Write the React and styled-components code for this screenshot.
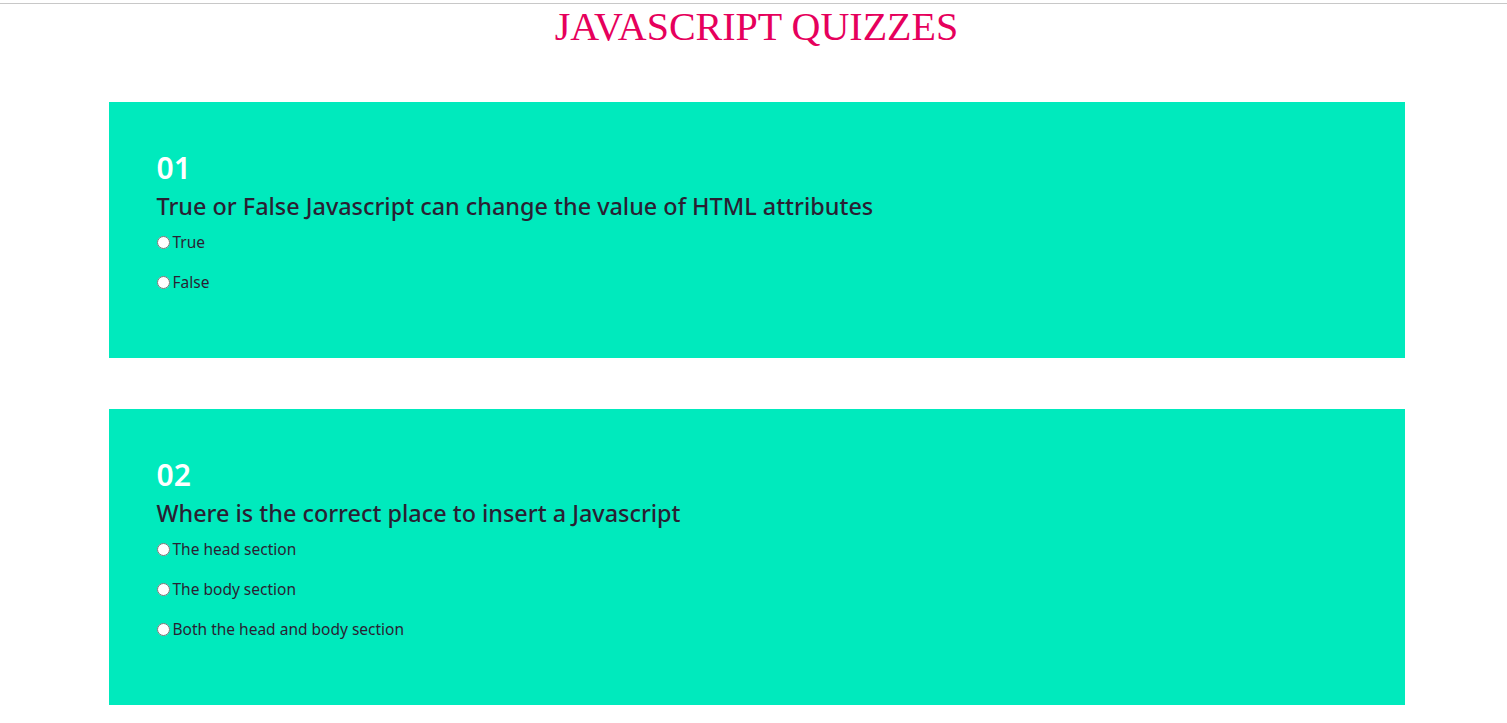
import React from 'react'
import styled, { createGlobalStyle } from 'styled-components'

const quizzes = [
  {
    id: '01',
    question: 'True or False Javascript can change the value of HTML attributes',
    options: ['True', 'False'],
  },
  {
    id: '02',
    question: 'Where is the correct place to insert a Javascript',
    options: ['The head section', 'The body section', 'Both the head and body section'],
  },
]

const GlobalStyle = createGlobalStyle`
  html, body {
    margin: 0;
    padding: 0;
    background: #fff;
  }
  body {
    border-top: 1px solid #c8c8c8;
    margin-top: 3px;
  }
`

export default function App() {
  return (
    <>
      <GlobalStyle />
      <Page>
        <Title>JAVASCRIPT QUIZZES</Title>
        <List>
          {quizzes.map((q) => (
            <Card key={q.id}>
              <Number>{q.id}</Number>
              <Question>{q.question}</Question>
              {q.options.map((opt) => (
                <Option key={opt}>
                  <Radio type="radio" name={`q${q.id}`} />
                  {opt}
                </Option>
              ))}
            </Card>
          ))}
        </List>
      </Page>
    </>
  )
}

const Page = styled.div`
  display: flex;
  flex-direction: column;
  align-items: center;
  padding-left: 6px;
`

const Title = styled.h1`
  font-family: 'Liberation Serif', 'Times New Roman', serif;
  font-weight: 400;
  font-size: 40px;
  line-height: 46px;
  color: #e6005c;
  margin: 0 0 52px;
`

const List = styled.div`
  width: 1296px;
  display: flex;
  flex-direction: column;
  gap: 51px;
`

const Card = styled.section`
  background: #00eabd;
  padding: 48px 48px 46px;
  display: flex;
  flex-direction: column;
  align-items: flex-start;
  font-family: 'Noto Sans', 'Open Sans', sans-serif;
`

const Number = styled.h2`
  margin: 0 0 4px;
  font-size: 30px;
  font-weight: 600;
  line-height: 36px;
  color: #fff;
`

const Question = styled.h3`
  margin: 0 0 10px;
  font-size: 23.4px;
  font-weight: 500;
  line-height: 32px;
  color: #2a1f33;
`

const Option = styled.label`
  display: flex;
  align-items: center;
  font-size: 15.5px;
  line-height: 20px;
  color: #2a1f33;
  margin-bottom: 20px;
`

const Radio = styled.input`
  width: 13px;
  height: 13px;
  margin: 0 3px 0 0;
`
